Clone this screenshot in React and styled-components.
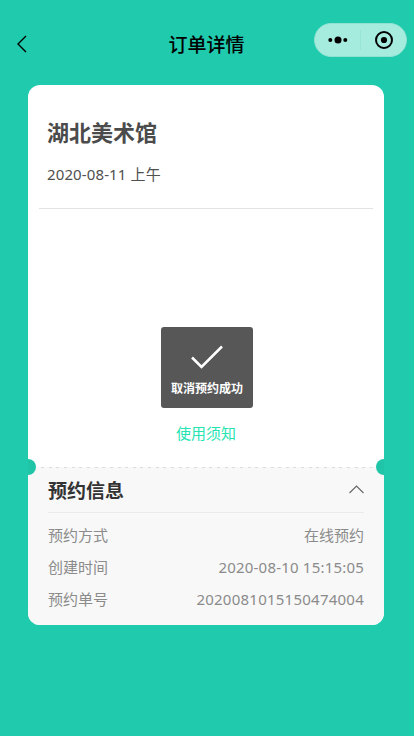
import React from 'react';
import styled, { createGlobalStyle } from 'styled-components';

const GlobalStyle = createGlobalStyle`
  * { box-sizing: border-box; }
  body {
    margin: 0;
    background: #1fcaad;
    font-family: "Noto Sans", "Noto Sans CJK SC", sans-serif;
  }
  h1, h2, h3, p, dl, dt, dd { margin: 0; }
`;

const Screen = styled.main`
  min-height: 736px;
  background: #1fcaad;
`;

const NavBar = styled.header`
  display: grid;
  grid-template-columns: 100px 1fr 100px;
  height: 85px;
  padding: 23px 7px 0 10px;
`;

const BackButton = styled.button`
  display: flex;
  width: 24px;
  height: 42px;
  padding: 0;
  border: 0;
  background: none;
  align-items: center;
  justify-content: center;
  color: #000;
`;

const NavTitle = styled.h1`
  font: 500 19px/42px "Noto Sans CJK SC", sans-serif;
  text-align: center;
  white-space: nowrap;
  transform: translateX(-2px);
  color: #000;
`;

const Capsule = styled.div`
  display: flex;
  align-items: center;
  justify-content: flex-end;
  width: 93px;
  height: 34px;
  margin-left: auto;
  margin-right: 0;
  border-radius: 17px;
  border: 1px solid #8fe2d2;
  background: #a5ecde;
`;

const CapsuleAction = styled.div`
  display: flex;
  flex: 1;
  height: 20px;
  align-items: center;
  justify-content: center;
  border-left: ${(p) => (p.$divided ? '1px solid #98e5d5' : '0')};
`;

const Card = styled.article`
  width: 356px;
  height: 540px;
  margin-left: 28px;
  border-radius: 12px;
  overflow: hidden;
  background: #fff;
`;

const Venue = styled.section`
  height: 124px;
  margin: 0 11px;
  padding: 30px 8px 0;
  border-bottom: 1px solid #e3e3e3;
`;

const VenueName = styled.h2`
  font: 700 22px/32px "Noto Sans CJK SC", sans-serif;
  color: #4b4b4b;
`;

const VisitDate = styled.p`
  margin-top: 16px;
  font-size: 15px;
  line-height: 22px;
  letter-spacing: 0.12px;
  color: #505050;
`;

const Status = styled.section`
  display: flex;
  flex-direction: column;
  align-items: center;
  height: 258px;
  padding-top: 118px;
`;

const Toast = styled.div`
  display: flex;
  flex-direction: column;
  align-items: center;
  width: 92px;
  height: 81px;
  padding-top: 18px;
  margin-right: -2px;
  border-radius: 3px;
  background: #575757;
  color: #fff;
`;

const ToastText = styled.span`
  margin-top: 10px;
  font: 700 12px/18px "Noto Sans CJK SC", sans-serif;
`;

const NoticeLink = styled.a`
  margin-top: 14px;
  font-size: 15px;
  line-height: 22px;
  color: #25e4b2;
`;

const Info = styled.section`
  position: relative;
  height: 158px;
  padding: 0 20px;
  background: #f8f8f8;
`;

const Perforation = styled.div`
  position: absolute;
  top: 0;
  left: 13px;
  right: 12px;
  height: 1px;
  background: repeating-linear-gradient(to right, #dcdcdc 0 3px, transparent 3px 7.65px);
`;

const Notch = styled.i`
  position: absolute;
  top: -8px;
  ${(p) => p.$side}: -8px;
  width: 16px;
  height: 16px;
  border-radius: 50%;
  background: #20c5a8;
`;

const InfoHeader = styled.div`
  display: flex;
  align-items: center;
  justify-content: space-between;
  height: 46px;
  border-bottom: 1px solid #eaeaea;
  color: #666;
`;

const InfoTitle = styled.h3`
  font: 700 19px/44px "Noto Sans CJK SC", sans-serif;
  color: #333;
`;

const Details = styled.dl`
  padding-top: 6px;
`;

const DetailRow = styled.div`
  display: flex;
  justify-content: space-between;
  height: 32px;
  font-size: 15px;
  line-height: 32px;
  color: #8b8b8b;
`;

const DetailValue = styled.dd`
  letter-spacing: ${(p) => p.$tracking || 0}px;
`;

const details = [
  { label: '预约方式', value: '在线预约' },
  { label: '创建时间', value: '2020-08-10 15:15:05', tracking: 0.2 },
  { label: '预约单号', value: '2020081015150474004', tracking: 0.24 },
];

export default function App() {
  return (
    <Screen>
      <GlobalStyle />
      <NavBar>
        <BackButton aria-label="返回">
          <svg width="12" height="18" viewBox="0 0 12 18" fill="none" stroke="currentColor" strokeWidth="1.4">
            <path d="M10 1 2 9l8 8" />
          </svg>
        </BackButton>
        <NavTitle>订单详情</NavTitle>
        <Capsule>
          <CapsuleAction>
            <svg width="20" height="10" viewBox="0 0 20 10">
              <circle cx="2.3" cy="5" r="2" />
              <circle cx="10" cy="5" r="3.5" />
              <circle cx="17.3" cy="5" r="2" />
            </svg>
          </CapsuleAction>
          <CapsuleAction $divided>
            <svg width="18" height="18" viewBox="0 0 18 18">
              <circle cx="9" cy="9" r="8" fill="none" stroke="#000" strokeWidth="2" />
              <circle cx="9" cy="9" r="3.1" />
            </svg>
          </CapsuleAction>
        </Capsule>
      </NavBar>
      <Card>
        <Venue>
          <VenueName>湖北美术馆</VenueName>
          <VisitDate>2020-08-11 上午</VisitDate>
        </Venue>
        <Status>
          <Toast>
            <svg width="32" height="24" viewBox="0 0 32 24" fill="none" stroke="currentColor" strokeWidth="2.5">
              <path d="M1 12.5 10.5 22 31 1.5" />
            </svg>
            <ToastText>取消预约成功</ToastText>
          </Toast>
          <NoticeLink>使用须知</NoticeLink>
        </Status>
        <Info>
          <Perforation />
          <Notch $side="left" />
          <Notch $side="right" />
          <InfoHeader>
            <InfoTitle>预约信息</InfoTitle>
            <svg width="15" height="9" viewBox="0 0 15 9" fill="none" stroke="currentColor" strokeWidth="1.1">
              <path d="M.5 8 7.5 1l7 7" />
            </svg>
          </InfoHeader>
          <Details>
            {details.map(({ label, value, tracking }) => (
              <DetailRow key={label}>
                <dt>{label}</dt>
                <DetailValue $tracking={tracking}>{value}</DetailValue>
              </DetailRow>
            ))}
          </Details>
        </Info>
      </Card>
    </Screen>
  );
}
